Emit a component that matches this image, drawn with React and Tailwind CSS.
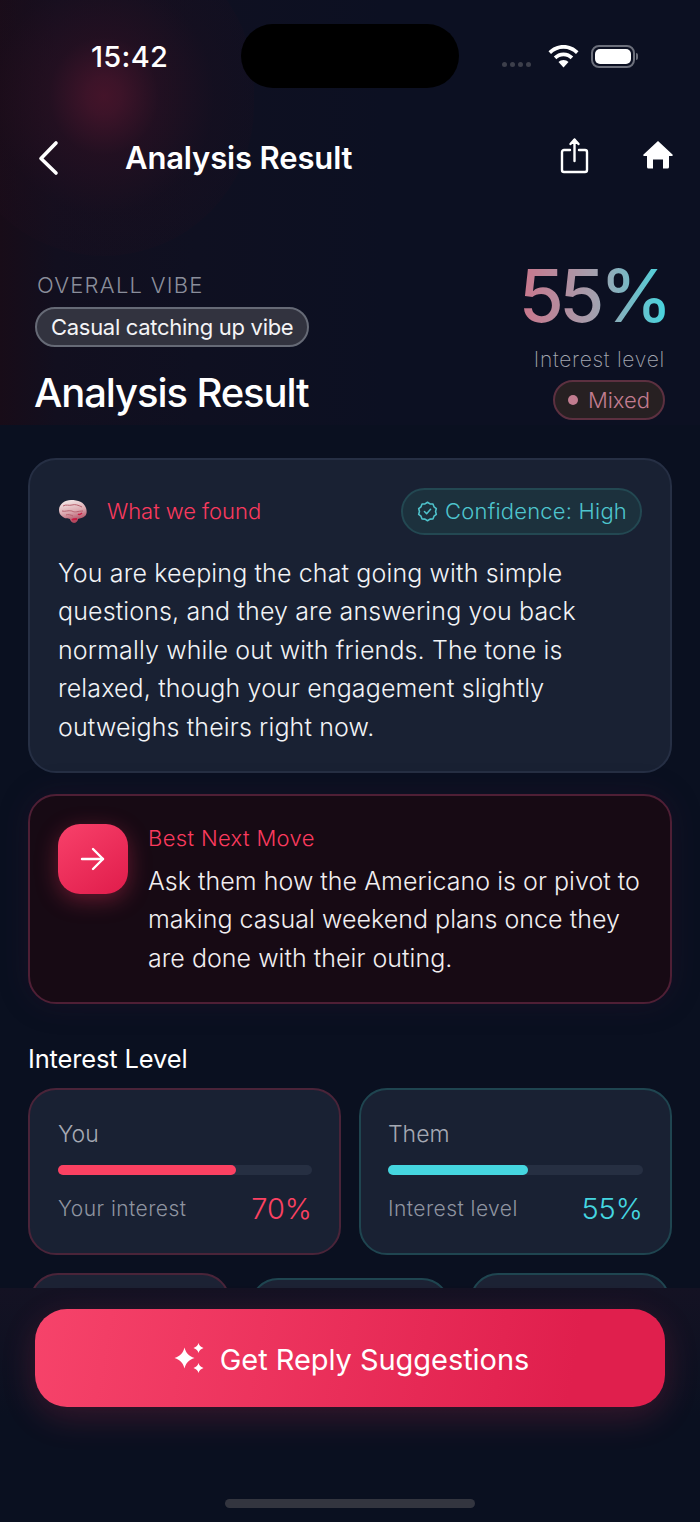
import React from "react";

const Brain = () => (
  <svg width="30" height="26" viewBox="0 0 30 26" className="mt-[2px] shrink-0">
    <defs>
      <linearGradient id="br" x1="0.3" y1="0" x2="0.6" y2="1">
        <stop offset="0" stopColor="#f4e8e8" />
        <stop offset="0.5" stopColor="#dcaab1" />
        <stop offset="1" stopColor="#a83a52" />
      </linearGradient>
    </defs>
    <path d="M1 11C1 5 7 1 13 1c7 0 13 2 15 8 1 3 1 6-1 8-2 2-5 2-7 3 0 2-2 4-4 4s-4-3-4-4c-2-1-5 0-7-2-3-2-4-4-4-7z" fill="url(#br)" />
    <path d="M5 7c3-2 6 0 9-1 3-1 6 0 10 2M4 12c3 1 6-1 10 0 3 2 6 0 11 0M8 16c2-1 5 0 7 1" stroke="#b8616f" strokeWidth="1" fill="none" />
    <path d="M14 21c1-1 4-1 5-1" stroke="#c81e45" strokeWidth="1.8" fill="none" />
    <path d="M20 15c1 1 3 0 4-1" stroke="#c81e45" strokeWidth="1.4" fill="none" />
  </svg>
);

const scallop = Array.from({ length: 20 }, (_, i) => {
  const a = (i / 20) * Math.PI * 2;
  const r = i % 2 ? 10.6 : 9.2;
  return `${(12 + r * Math.cos(a)).toFixed(2)},${(12 + r * Math.sin(a)).toFixed(2)}`;
}).join(" ");

const Badge = () => (
  <svg width="21" height="21" viewBox="0 0 24 24" fill="none" stroke="#4fc3cc" strokeWidth="1.8" strokeLinecap="round" strokeLinejoin="round">
    <polygon points={scallop} />
    <path d="m8.500 12 2.500 2.500 4.500-5" />
  </svg>
);

const Sparkles = () => (
  <svg width="30" height="30" viewBox="0 0 30 30" fill="white">
    <path d="M10.500 4.500C12 10 14.500 13 20.500 15c-6 2-8.500 5-10 10.500C9 20 6.500 17 .5 15c6-2 8.500-5 10-10.500z" />
    <path d="M24.500 0c.8 2.600 1.900 3.900 5 5-3.100 1.100-4.200 2.400-5 5-.8-2.600-1.900-3.900-5-5 3.100-1.100 4.200-2.400 5-5z" />
    <path d="M24.500 20c.8 2.600 1.900 3.900 5 5-3.100 1.100-4.200 2.400-5 5-.8-2.600-1.900-3.900-5-5 3.100-1.100 4.200-2.400 5-5z" />
  </svg>
);

function MeterCard({ title, sub, value, pct, bar, text, border, pad }) {
  return (
    <div className={`rounded-[28px] border-2 ${border} ${pad} bg-[#192133] pt-[29px] h-[167px]`}>
      <div className="text-[23px] leading-[30px] font-light text-[#a5a9b3]">{title}</div>
      <div className="mt-[16px] h-[10px] rounded-full bg-[#262f42]">
        <div className={`h-full rounded-full ${bar}`} style={{ width: `${pct}%` }} />
      </div>
      <div className="mt-[16px] flex items-center justify-between">
        <span className="text-[21px] font-light tracking-[0.45px] text-[#8f94a0]">{sub}</span>
        <span className={`text-[29px] font-light leading-[36px] ${text}`}>{value}</span>
      </div>
    </div>
  );
}

export default function App() {
  return (
    <div className="relative flex h-[1522px] w-[700px] flex-col overflow-hidden bg-[#0a0f20] font-['Inter','Noto_Sans',sans-serif] text-white">
      <header className="relative h-[425px] shrink-0 overflow-hidden bg-[linear-gradient(90deg,#180c18_0%,#120f1f_8%,#0f1021_28%,#0c1022_55%,#0c1022_100%)]">
        <div className="pointer-events-none absolute left-[-46px] top-[-64px] h-[320px] w-[300px] rounded-full bg-[radial-gradient(ellipse_at_center,rgba(70,20,42,0.95)_0%,rgba(68,20,42,0.85)_8%,rgba(48,16,34,0.55)_26%,rgba(32,14,30,0.3)_52%,rgba(20,12,28,0)_100%)]" />
        <div className="relative flex h-[128px] items-start">
          <div className="ml-[91px] mt-[39px] text-[29px] font-medium leading-[36px] tracking-[0.3px]">15:42</div>
          <div className="absolute left-[241px] top-[24px] h-[64px] w-[218px] rounded-full bg-black" />
          <div className="absolute left-[502px] top-[62px] flex gap-[3px]">
            <i className="h-[5px] w-[5px] rounded-full bg-[#3d3f4b]" />
            <i className="h-[5px] w-[5px] rounded-full bg-[#3d3f4b]" />
            <i className="h-[5px] w-[5px] rounded-full bg-[#3d3f4b]" />
            <i className="h-[5px] w-[5px] rounded-full bg-[#3d3f4b]" />
          </div>
          <svg className="absolute left-[548px] top-[45px]" width="31" height="23" viewBox="0 0 31 23" fill="white">
            <path d="M15.500 0C9.600 0 4.300 2.400.5 6.300L3 9c3.200-3.300 7.600-5.300 12.500-5.300S24.800 5.700 28 9l2.500-2.700C26.700 2.400 21.400 0 15.500 0z" />
            <path d="M15.500 7.500c-3.800 0-7.200 1.600-9.700 4.100l2.600 2.700c1.800-1.900 4.300-3 7.100-3s5.300 1.100 7.100 3l2.600-2.700c-2.500-2.500-5.900-4.100-9.700-4.100z" />
            <path d="M15.500 15c-2 0-3.700.8-5 2.100l5 5.400 5-5.400c-1.300-1.300-3-2.100-5-2.100z" />
          </svg>
          <div className="absolute left-[591px] top-[45px] flex items-center">
            <div className="h-[23px] w-[44px] rounded-[8px] border-2 border-[#6c6f7b] p-[2px]">
              <div className="h-full w-full rounded-[5px] bg-white" />
            </div>
            <div className="ml-[1px] h-[7px] w-[2px] rounded-r-full bg-[#6c6f7b]" />
          </div>
        </div>

        <div className="relative flex h-[60px] items-center pl-[38px]">
          <svg width="22" height="36" viewBox="0 0 22 36" fill="none" stroke="white" strokeWidth="3.600" strokeLinecap="round" strokeLinejoin="round">
            <path d="M18 3 3 18.500 18 33" />
          </svg>
          <div className="ml-[65px] text-[31px] font-semibold tracking-[-0.15px]">Analysis Result</div>
          <svg className="absolute left-[560px] top-[9px]" width="30" height="38" viewBox="0 0 30 38" fill="none" stroke="white" strokeWidth="2.400" strokeLinecap="round" strokeLinejoin="round">
            <path d="M10 13H4a2 2 0 0 0-2 2v18a2 2 0 0 0 2 2h21a2 2 0 0 0 2-2V15a2 2 0 0 0-2-2h-6" />
            <path d="M14.500 24V3" />
            <path d="M10.500 7l4-4.500 4 4.500" fill="white" />
          </svg>
          <svg className="absolute left-[643px] top-[13px]" width="30" height="28" viewBox="0 0 30 28" fill="white">
            <path d="M15 0 .5 13.500c-.6.600-.2 1.500.6 1.500H4v11a1.500 1.500 0 0 0 1.500 1.500H10v-9h10v9h4.500A1.500 1.500 0 0 0 26 26V15h2.900c.8 0 1.200-.9.6-1.500z" />
          </svg>
        </div>

        <div className="relative mt-[82px] flex justify-between px-[35px]">
          <div>
            <div className="pl-[2px] text-[22px] font-light leading-[30px] tracking-[1.25px] text-[#8b8e9b]">OVERALL VIBE</div>
            <div className="mt-[7px] inline-flex h-[40px] items-center rounded-full border-2 border-[#666a76] bg-[#32333f] px-[14px] text-[22px] tracking-[-0.3px] text-[#f4f4f6]">
              Casual catching up vibe
            </div>
            <div className="ml-[-1px] mt-[21px] text-[40px] font-medium leading-[50px] tracking-[-1.1px]">Analysis Result</div>
          </div>
          <div className="flex flex-col items-end">
            <div className="mr-[-7px] mt-[-20px] bg-[linear-gradient(90deg,#cb758b_0%,#a3a0ae_50%,#40d9e2_100%)] bg-clip-text pr-[4px] text-[73px] font-medium leading-[92px] tracking-[-4.5px] text-transparent">55%</div>
            <div className="mt-[4px] text-[21px] font-extralight leading-[28px] tracking-[0.75px] text-[#a3a6b0]">Interest level</div>
            <div className="mt-[6px] flex h-[40px] items-center gap-[10px] rounded-full border-2 border-[#5c3040] bg-[#272022] px-[13px] text-[22px] font-light text-[#c27c90]">
              <span className="h-[10px] w-[10px] rounded-full bg-[#c27c90]" />
              Mixed
            </div>
          </div>
        </div>
      </header>

      <main className="relative h-[863px] shrink-0 overflow-hidden bg-[#0a1020] px-[28px] pt-[33px]">
        <section className="h-[315px] rounded-[28px] border-2 border-[#262f44] bg-[#192133] px-[28px] pt-[27px]">
          <div className="flex h-[48px] items-center justify-between">
            <div className="flex items-center gap-[19px]">
              <Brain />
              <span className="text-[22px] font-light tracking-[-0.05px] text-[#fa3a5e]">What we found</span>
            </div>
            <div className="flex h-[47px] items-center gap-[7px] rounded-full border-2 border-[#234852] bg-[#1c313d] pl-[14px] pr-[13px] text-[22px] font-light tracking-[0.2px] text-[#4ec5ce]">
              <Badge />
              Confidence: High
            </div>
          </div>
          <p className="mt-[19px] text-[25px] font-light leading-[38.4px] tracking-[0.13px] text-[#f1f3f6]">
            You are keeping the chat going with simple<br />
            questions, and they are answering you back<br />
            normally while out with friends. The tone is<br />
            relaxed, though your engagement slightly<br />
            outweighs theirs right now.
          </p>
        </section>

        <section className="mt-[21px] flex h-[210px] gap-[20px] rounded-[28px] border-2 border-[#4f1f35] bg-[#170a14] pl-[28px] pt-[28px] shadow-[0_0_30px_rgba(60,20,50,0.25)]">
          <div className="flex h-[70px] w-[70px] shrink-0 items-center justify-center rounded-[22px] bg-[linear-gradient(145deg,#f8416a,#e01c4b)] shadow-[0_6px_22px_rgba(245,55,95,0.35)]">
            <svg width="26" height="24" viewBox="0 0 26 24" fill="none" stroke="white" strokeWidth="2.400" strokeLinecap="round" strokeLinejoin="round">
              <path d="M2 12h21" />
              <path d="M13 2l10 10-10 10" />
            </svg>
          </div>
          <div>
            <div className="text-[22px] font-light leading-[28px] tracking-[0.35px] text-[#fa3a5e]">Best Next Move</div>
            <p className="mt-[10px] text-[25px] font-light leading-[38.4px] tracking-[0.03px] text-[#f1eef0]">
              Ask them how the Americano is or pivot to<br />
              making casual weekend plans once they<br />
              are done with their outing.
            </p>
          </div>
        </section>

        <h2 className="mt-[39px] text-[25.500px] font-normal leading-[32px] tracking-[-0.15px] text-white">Interest Level</h2>
        <div className="mt-[13px] grid grid-cols-2 gap-[18px]">
          <MeterCard title="You" sub="Your interest" value="70%" pct={70} bar="bg-[#fb4162]" text="text-[#fb4162]" border="border-[#4a2439]" pad="pl-[28px] pr-[27px]" />
          <MeterCard title="Them" sub="Interest level" value="55%" pct={55} bar="bg-[#45d6e0]" text="text-[#45d6e0]" border="border-[#1f4550]" pad="pl-[27px] pr-[27px]" />
        </div>
        <div className="mt-[18px] flex justify-between px-[2px]">
          <div className="h-[40px] w-[200px] rounded-t-[28px] border-2 border-[#4a2439] bg-[#1c2234]" />
          <div className="mt-[5px] h-[40px] w-[200px] rounded-t-[28px] border-2 border-[#1f4550] bg-[#1c2234]" />
          <div className="h-[40px] w-[200px] rounded-t-[28px] border-2 border-[#1f4550] bg-[#1c2234]" />
        </div>
      </main>

      <footer className="absolute bottom-0 left-0 h-[234px] w-full bg-[linear-gradient(180deg,#141223_0%,#0a1020_55%)] px-[35px] pt-[21px]">
        <button className="flex h-[98px] w-full items-center justify-center gap-[16px] rounded-[32px] bg-[linear-gradient(100deg,#f6436a_0%,#e01f4d_85%)] pl-[3px] shadow-[0_10px_34px_rgba(240,50,90,0.2)]">
          <Sparkles />
          <span className="mt-[4px] text-[29px] font-normal tracking-[-0.05px] text-white">Get Reply Suggestions</span>
        </button>
        <div className="mx-auto mt-[92px] h-[9px] w-[250px] rounded-full bg-[#33353f]" />
      </footer>
    </div>
  );
}
